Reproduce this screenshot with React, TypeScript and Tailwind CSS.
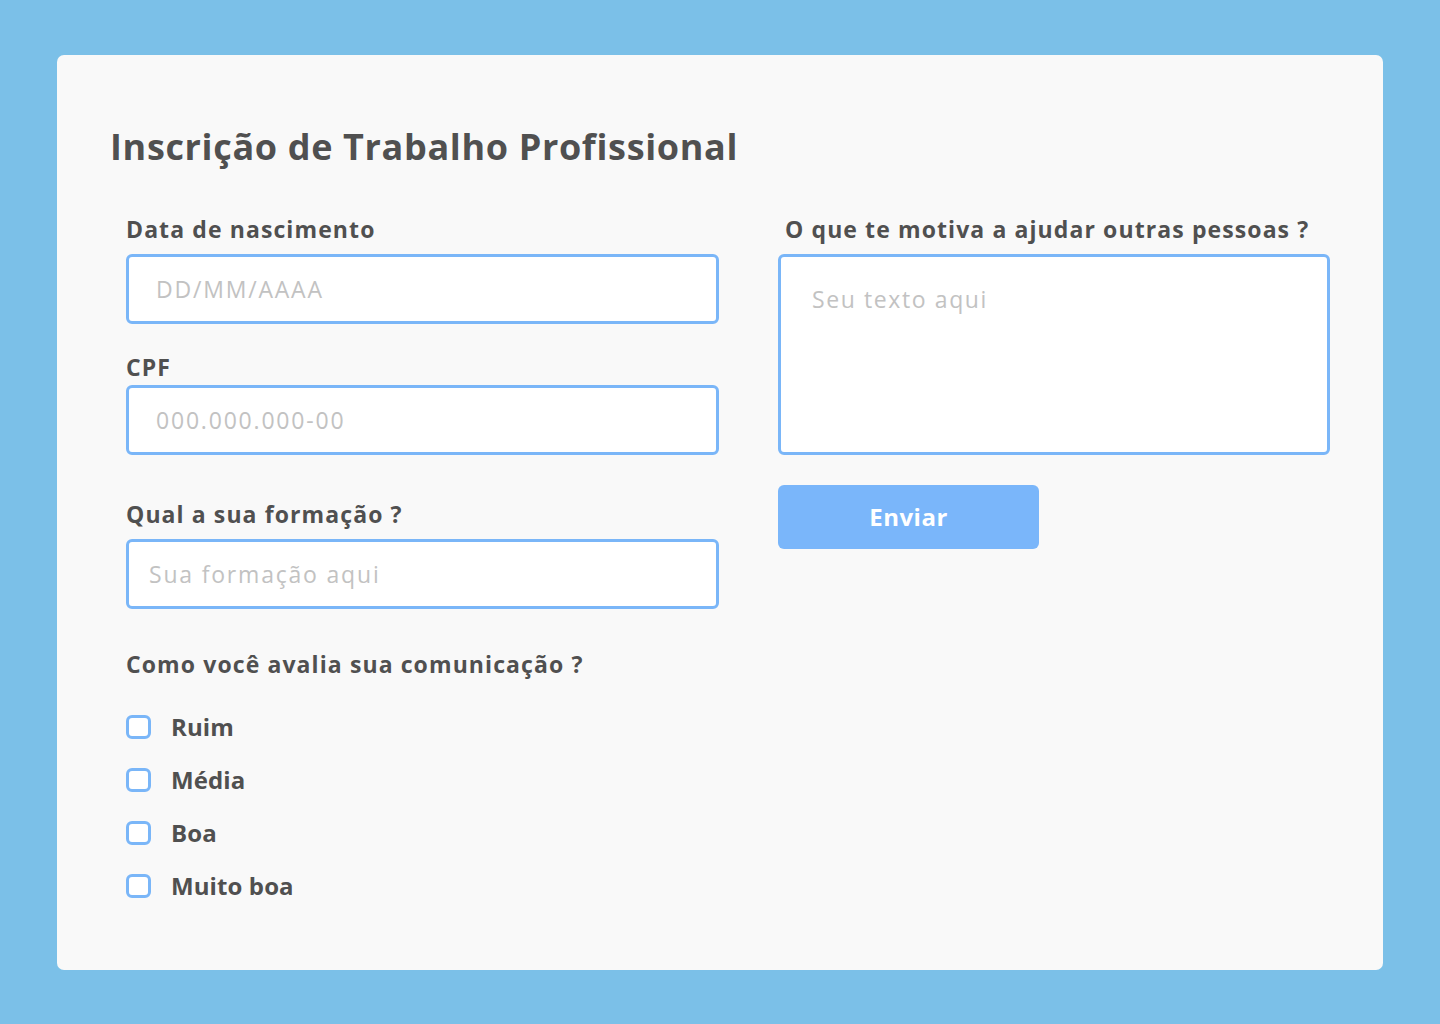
import React from 'react';

const font = { fontFamily: '"Open Sans", "Noto Sans", sans-serif' };

const Label: React.FC<{ children: React.ReactNode; className?: string }> = ({ children, className = '' }) => (
  <label className={`block text-[23px] leading-[30px] font-bold text-[#505050] tracking-[1.1px] ${className}`}>{children}</label>
);

const inputCls =
  'block w-full h-[70px] rounded-[6px] border-[3px] border-[#7AB6F8] bg-white text-[23px] tracking-[1.8px] text-[#505050] outline-none placeholder:text-[#c2c2c2]';

const Checkbox: React.FC<{ label: string }> = ({ label }) => (
  <label className="flex items-center h-[30px] gap-[20px] cursor-pointer">
    <input type="checkbox" className="appearance-none w-[25px] h-[24px] rounded-[6px] border-[3px] border-[#7AB6F8] bg-white" />
    <span className="text-[24px] font-bold text-[#505050] tracking-[0.1px]">{label}</span>
  </label>
);

export default function App() {
  return (
    <div className="min-h-screen bg-[#7BC0E8] pt-[55px] px-[57px] pb-[54px]" style={font}>
      <div className="bg-[#F9F9F9] rounded-[7px] h-[915px] px-[53px] pt-[65px]">
        <h1 className="text-[36px] leading-[54px] font-bold text-[#505050] tracking-[0.65px]">
          Inscrição de Trabalho Profissional
        </h1>

        <div className="flex mt-[40px]">
          {/* LEFT COLUMN */}
          <div className="w-[593px] ml-[16px]">
            <Label className="mb-[10px]">Data de nascimento</Label>
            <input className={`${inputCls} px-[27px]`} placeholder="DD/MM/AAAA" />

            <Label className="mt-[28px] mb-[3px]">CPF</Label>
            <input className={`${inputCls} px-[27px]`} placeholder="000.000.000-00" />

            <Label className="mt-[44px] mb-[10px]">Qual a sua formação ?</Label>
            <input className={`${inputCls} px-[20px]`} placeholder="Sua formação aqui" />

            <Label className="mt-[40px]">Como você avalia sua comunicação ?</Label>
            <div className="mt-[33px] flex flex-col gap-[23px]">
              <Checkbox label="Ruim" />
              <Checkbox label="Média" />
              <Checkbox label="Boa" />
              <Checkbox label="Muito boa" />
            </div>
          </div>

          {/* RIGHT COLUMN */}
          <div className="w-[552px] ml-[59px]">
            <Label className="mb-[10px] pl-[7px]">O que te motiva a ajudar outras pessoas ?</Label>
            <textarea
              className="block w-full h-[201px] resize-none rounded-[6px] border-[3px] border-[#7AB6F8] bg-white px-[31px] pt-[26px] text-[23px] tracking-[1.6px] leading-[32px] text-[#505050] outline-none placeholder:text-[#c2c2c2]"
              placeholder="Seu texto aqui"
            />
            <button className="mt-[30px] w-[261px] h-[64px] rounded-[6px] bg-[#7AB6FA] text-white text-[24px] font-bold tracking-[0.5px]">
              Enviar
            </button>
          </div>
        </div>
      </div>
    </div>
  );
}
